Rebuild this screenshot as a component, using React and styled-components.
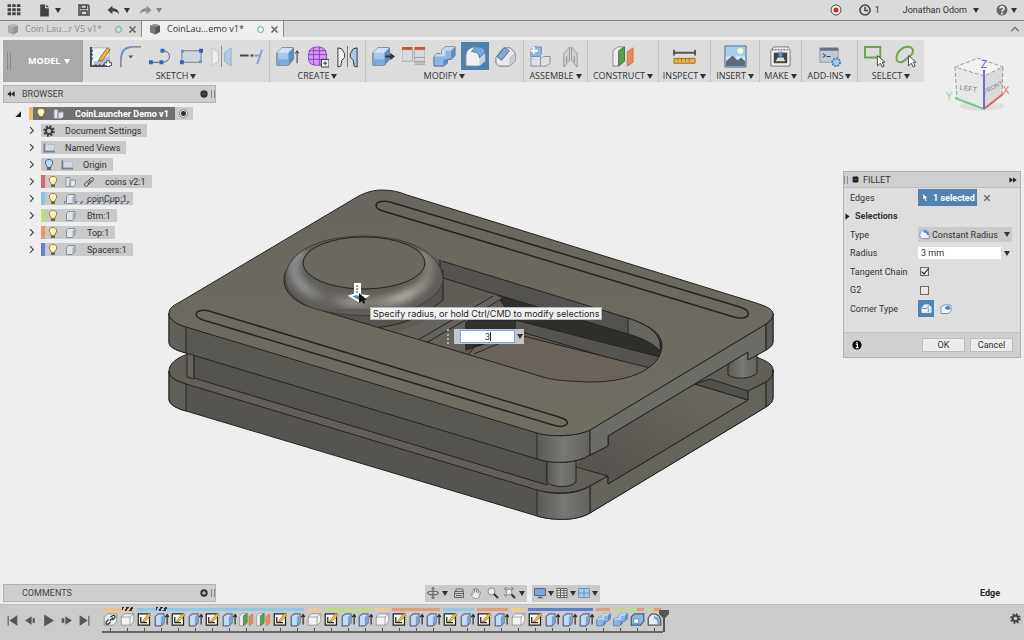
import React, { useState } from 'react';
import styled, { createGlobalStyle } from 'styled-components';

const GlobalStyle = createGlobalStyle`
  * {
    box-sizing: border-box;
  }

  body {
    margin: 0;
    background-color: #eeeeee;
    color: #333;
    font-family: Roboto, 'Noto Sans', sans-serif;
    font-size: 9px;
    line-height: 12px;
  }

  button, input, select {
    font: inherit;
    color: inherit;
    margin: 0;
    padding: 0;
    border: none;
    border-radius: 0;
    background: none;
  }

  svg {
    display: block;
    flex: none;
  }
`;

const Page = styled.div`
  display: flex;
  flex-direction: column;
  min-height: 100vh;
  overflow: hidden;
`;

/* top bar */

const TopBar = styled.header`
  display: flex;
  justify-content: space-between;
  align-items: center;
  height: 21px;
  padding: 0 7px;
  background-color: #dadada;
  border-bottom: 1px solid #858585;
`;

const TopGroup = styled.div`
  display: flex;
  align-items: center;
  gap: ${(p) => p.$gap || 17}px;
`;

const IconButton = styled.button`
  display: flex;
  align-items: center;
  gap: ${(p) => p.$gap || 3}px;
  opacity: ${(p) => (p.$dim ? 0.5 : 1)};
`;

const UserButton = styled(IconButton)`
  margin-left: 6px;
`;

const Caret = styled.span`
  width: 0;
  height: 0;
  border-left: 3px solid transparent;
  border-right: 3px solid transparent;
  border-top: 5px solid ${(p) => p.$color || '#333'};
`;

/* document tabs */

const TabBar = styled.nav`
  display: flex;
  height: 16px;
  background-color: #d7d7d7;
  font-family: 'Open Sans', 'Noto Sans', sans-serif;
`;

const Tab = styled.div`
  display: flex;
  align-items: center;
  width: 142px;
  padding: 0 4px 0 7px;
  border-right: 1px solid #8c8c8c;
  background-color: ${(p) => (p.$active ? '#efefef' : '#d7d7d7')};
  color: ${(p) => (p.$active ? '#333' : '#8d8d8d')};
`;

const TabName = styled.button`
  display: flex;
  flex: 1;
  align-items: center;
  gap: 6px;
  white-space: nowrap;

  svg {
    opacity: ${(p) => (p.$active ? 1 : 0.5)};
  }
`;

const TabStatus = styled.span`
  width: 7px;
  height: 7px;
  margin-right: 6px;
  border: 1px solid #55b795;
  border-radius: 50%;
`;

const Collapse = styled.button`
  margin: 0 4px 0 auto;
`;

/* ribbon */

const Ribbon = styled.div`
  display: flex;
  align-self: flex-start;
  height: 42px;
  margin: 3px 0 0 3px;
  background-color: #dcdcdc;
  font-family: 'Open Sans', 'Noto Sans', sans-serif;
`;

const Workspace = styled.button`
  display: flex;
  align-items: center;
  width: 80px;
  padding-left: 4px;
  gap: 4px;
  background-color: #a9a9a9;
  color: #fff;
  font-weight: 700;
`;

const Grip = styled.span`
  width: 4px;
  height: ${(p) => p.$h || 18}px;
  margin-right: ${(p) => p.$mr || 0}px;
  border-left: 1px solid #8a8a8a;
  border-right: 1px solid #8a8a8a;
`;

const Group = styled.section`
  display: flex;
  flex-direction: column;
  justify-content: space-between;
  width: ${(p) => p.$w}px;
  padding: 2px 2px 0;
  border-right: 1px solid #c2c2c2;

  &:last-child {
    border-right: none;
  }
`;

const GroupIcons = styled.div`
  display: flex;
  justify-content: space-around;
`;

const Tool = styled.button`
  display: grid;
  place-items: center;
  width: 28px;
  height: 28px;
  background-color: ${(p) => (p.$active ? '#4f80ab' : 'transparent')};
`;

const GroupLabel = styled.button`
  display: flex;
  justify-content: center;
  align-items: center;
  gap: 2px;
  height: 12px;
  white-space: nowrap;
`;

/* stage */

const Stage = styled.main`
  position: relative;
  display: flex;
  flex: 1;
  flex-direction: column;
  justify-content: space-between;
  padding: 3px 3px 2px;
`;

const ModelView = styled.svg`
  position: absolute;
  inset: 0;
  width: 100%;
  height: 100%;
`;

const CubeView = styled.svg`
  position: absolute;
  top: -30px;
  right: 10px;
`;

const PanelRow = styled.div`
  position: relative;
  display: flex;
  justify-content: space-between;
  align-items: flex-start;
`;

const FooterRow = styled.div`
  position: relative;
  display: grid;
  grid-template-columns: 1fr auto 1fr;
  align-items: center;
`;

const PanelHead = styled.div`
  display: flex;
  align-items: center;
  gap: 3px;
  width: 213px;
  height: 18px;
  padding: 0 0 0 3px;
  border: 1px solid #b2b2b2;
  background-color: #cecece;
  color: #444;
`;

const PanelName = styled.span`
  flex: 1;
  padding-left: ${(p) => p.$indent || 0}px;
`;

const Tree = styled.ul`
  display: flex;
  flex-direction: column;
  gap: 4px;
  margin: 4px 0 0;
  padding: 0;
  list-style: none;
`;

const TreeRow = styled.li`
  display: flex;
  align-items: center;
  height: 13px;
  padding-left: ${(p) => (p.$root ? 8 : 21)}px;
`;

const Expander = styled.button`
  display: grid;
  place-items: center;
  width: 14px;
  height: 13px;
  margin-right: ${(p) => (p.$root ? 4 : 3)}px;
`;

const Node = styled.div`
  display: flex;
  align-items: center;
  gap: 6px;
  height: 13px;
  padding: 0 6px 0 2px;
  border-left: ${(p) => (p.$color ? `4px solid ${p.$color}` : 'none')};
  background-color: ${(p) => (p.$root ? '#717171' : '#c9c9c9')};
  color: ${(p) => (p.$root ? '#fff' : '#333')};
  font-weight: ${(p) => (p.$root ? 700 : 400)};
  white-space: nowrap;
`;

const NodeName = styled.span`
  padding-left: 4px;
`;

const EditedNode = styled(Node)`
  background-image: repeating-linear-gradient(120deg, #7485a8 0 2px, transparent 2px 5px);
  background-repeat: no-repeat;
  background-size: 66px 3px;
  background-position: right 3px bottom 1px;
`;

const Active = styled.label`
  display: grid;
  place-items: center;
  width: 18px;
  height: 13px;
  background-color: #cccccc;

  input {
    appearance: none;
    width: 9px;
    height: 9px;
    border: 1px solid #888;
    border-radius: 50%;
    background: radial-gradient(circle, #333 0 2px, #eee 3px);
  }
`;

/* fillet dialog */

const Dialog = styled.form`
  width: 178px;
  margin-top: 86px;
  border: 1px solid #b0b0b0;
  background-color: #dedede;
`;

const DialogHead = styled.div`
  display: flex;
  align-items: center;
  gap: 4px;
  height: 16px;
  padding: 0 3px 0 0;
  border-bottom: 1px solid #bdbdbd;
  background-color: #cfcfcf;
`;

const DialogBody = styled.div`
  display: flex;
  flex-direction: column;
  justify-content: space-between;
  height: 144px;
  padding: 1px 6px 15px;
`;

const Field = styled.div`
  display: grid;
  grid-template-columns: 68px 1fr;
  align-items: center;
  height: 17px;
`;

const FieldValue = styled.div`
  display: flex;
  align-items: center;
  gap: ${(p) => p.$gap || 0}px;
`;

const Picked = styled.button`
  display: flex;
  align-items: center;
  gap: 3px;
  height: 17px;
  padding: 0 2px 0 3px;
  background-color: #4f84b0;
  color: #fff;
  font-weight: 700;
  white-space: nowrap;
`;

const Disclosure = styled.button`
  display: flex;
  align-items: center;
  gap: 4px;
  height: 17px;
  margin-left: -6px;
  font-weight: 700;
`;

const SelectBox = styled.div`
  display: flex;
  align-items: center;
  width: 94px;
  height: 15px;
  padding: 0 2px 0 1px;
  background-color: #cacaca;

  select {
    flex: 1;
    min-width: 0;
    padding-left: 2px;
    appearance: none;
    outline: none;
  }
`;

const TextInput = styled.input`
  width: 83px;
  height: 12px;
  padding-left: 3px;
  margin-right: 3px;
  background-color: #fff;
`;

const Check = styled.input`
  appearance: none;
  width: 9px;
  height: 9px;
  margin-left: 2px;
  border: 1px solid #666;
  background-color: #e8e8e8;

  &:checked::after {
    content: '';
    display: block;
    width: 3px;
    height: 6px;
    margin: -1px 0 0 2px;
    border: solid #111;
    border-width: 0 1px 1px 0;
    transform: rotate(40deg);
  }
`;

const CornerButton = styled.button`
  display: grid;
  place-items: center;
  width: 16px;
  height: 17px;
  background-color: ${(p) => (p.$active ? '#4f84b0' : 'transparent')};
`;

const DialogFoot = styled.div`
  display: flex;
  align-items: center;
  gap: 5px;
  height: 25px;
  padding: 0 7px 0 8px;
  border-top: 1px solid #c0c0c0;
  background-color: #d0d0d0;
`;

const PushButton = styled.button`
  width: 43px;
  height: 14px;
  border: 1px solid #bdbdbd;
  background-color: #ececec;
  line-height: 12px;

  &:first-of-type {
    margin-left: auto;
  }
`;

/* things floating over the model */

const Hint = styled.div`
  position: absolute;
  top: 225px;
  left: calc(50% - 142px);
  height: 13px;
  padding: 0 2px;
  border: 1px solid #b5b5b5;
  background-color: #f1f1f1;
  color: #222;
  font-family: Inter, sans-serif;
  font-size: 9px;
  line-height: 11px;
  white-space: nowrap;
`;

const ValueBox = styled.label`
  position: absolute;
  top: 247px;
  left: calc(50% - 65px);
  display: flex;
  align-items: center;
  gap: 1px;
  height: 15px;

  &::before {
    content: '';
    height: 15px;
    border-left: 2px dotted #b0b0b0;
  }
`;

const ValueFrame = styled.span`
  position: relative;
  display: flex;
  align-items: center;
  gap: 2px;
  height: 15px;
  margin-left: 4px;
  padding: 0 1px 0 6px;
  background-color: #c5c5c5;

  input {
    width: 55px;
    height: 13px;
    border: 1px solid #7ba6dd;
    background-color: #fff;
    text-align: center;
    outline: none;
  }
`;

const TextCursor = styled.span`
  position: absolute;
  top: 3px;
  left: 36px;
  height: 9px;
  border-left: 1px solid #333;
`;

/* navigation bar + timeline */

const NavBar = styled.div`
  display: flex;
  gap: 5px;
`;

const NavGroup = styled.div`
  display: flex;
  align-items: center;
  gap: ${(p) => p.$gap}px;
  height: 17px;
  padding: 0 2px;
  background-color: #cacaca;
`;

const Selected = styled.strong`
  justify-self: end;
  padding-right: 21px;
  font-weight: 700;
  color: #222;
`;

const Timeline = styled.footer`
  display: flex;
  height: 36px;
  padding: 3px 3px 0 6px;
  border-top: 1px solid #bbb;
  background-color: #cbcbcb;
`;

const Playback = styled.div`
  display: flex;
  height: 24px;
  align-items: center;
  gap: 5px;
  margin-right: 11px;
`;

const History = styled.div`
  display: flex;
  align-items: flex-start;
`;

const Stretch = styled.div`
  display: flex;
  flex-wrap: wrap;
  width: ${(p) => p.$count * 17}px;

  &::before {
    content: '';
    width: 100%;
    height: 3px;
    margin: 0 2px 0 1px;
    background: ${(p) => p.$color};
  }
`;

const Step = styled.button`
  position: relative;
  display: flex;
  align-items: flex-start;
  width: 17px;
  height: 22px;
  padding: 1px 0 0 1px;
  border-bottom: 2px solid #666;

  &::after {
    content: '';
    position: absolute;
    left: 8px;
    bottom: 0;
    height: 3px;
    border-left: 1px solid #555;
  }
`;

const Hatch = styled.span`
  position: absolute;
  top: -4px;
  left: 3px;
  width: 11px;
  height: 4px;
  background: repeating-linear-gradient(120deg, #333 0 2px, transparent 2px 4px);
`;

const Marker = styled.svg`
  margin-left: -4px;
`;

const Settings = styled.button`
  align-self: flex-start;
  margin: 5px 0 0 auto;
`;

const box = (
  <>
    <path d="M3 8l5-5h12v12l-5 6H3z" fill="#a5c8ec" stroke="#55606f" />
    <path d="M3 8l5-5h12l-5 5z" fill="#cfe2f6" />
    <path d="M15 8l5-5v12l-5 6z" fill="#5f8cc4" />
    <path d="M3 15h12v6H3z" fill="#7fa9dc" />
  </>
);

const cursor = <path d="M14 11v11l3-3 2 4 2-1-2-4h3z" fill="#fff" stroke="#444" />;

const icons = {
  grid: (
    <path d="M1 2h6v5H1zM9 2h6v5H9zM17 2h6v5h-6zM1 9h6v5H1zM9 9h6v5H9zM17 9h6v5h-6zM1 16h6v5H1zM9 16h6v5H9zM17 16h6v5h-6z" fill="#444" />
  ),
  file: <path d="M4 1h9v7h7v15H4zM15 1l5 5h-5z" fill="#444" />,
  save: (
    <path d="M2 2h18l2 2v18H2zM6 2v7h11V2M6 22v-8h12v8" fill="none" stroke="#444" strokeWidth="3" />
  ),
  undo: <path d="M1 11l9-8v5c8 0 12 4 12 11-3-4-6-5-12-5v5z" fill="#444" />,
  redo: <path d="M23 11l-9-8v5c-8 0-12 4-12 11 3-4 6-5 12-5v5z" fill="#444" />,
  record: (
    <>
      <circle cx="12" cy="12" r="10" fill="#f4f4f4" stroke="#444" strokeWidth="2" />
      <circle cx="12" cy="12" r="5" fill="#d32222" />
    </>
  ),
  clock: (
    <path d="M12 2a10 10 0 1 0 .1 0zM12 6v7h6" fill="none" stroke="#444" strokeWidth="3" />
  ),
  cube: (
    <>
      <path d="M2 5l11-3 9 3v13l-9 5-11-5z" fill="#555" />
      <path d="M2 5l11 3v15L2 18z" fill="#7b7b7b" />
      <path d="M2 5l11-3 9 3-9 3z" fill="#9b9b9b" />
    </>
  ),
  close: <path d="M4 4l16 16M20 4L4 20" stroke="#666" strokeWidth="4" />,
  up: <path d="M3 17l9-9 9 9" fill="none" stroke="#666" strokeWidth="3" />,
  sketch: (
    <>
      <path d="M2 3h19v18H2z" fill="#eef2f8" stroke="#a8b2c0" />
      <path d="M5 17c5 0 10-2 16-6v9H5z" fill="#a4c0e6" />
      <path d="M2 2v20h20M2 6h2M2 10h2M2 14h2M7 22v-2M11 22v-2M15 22v-2" fill="none" stroke="#3f4a5c" strokeWidth="2" />
      <path d="M11 14l8-11 3 2-8 11-4 1z" fill="#f2b632" stroke="#8a6a2a" />
      <path d="M20 16v7M16 20h8" stroke="#555" strokeWidth="4" />
      <path d="M20 17v5M17 20h6" stroke="#fff" strokeWidth="2" />
    </>
  ),
  arc: (
    <>
      <path d="M2 23v-7" stroke="#555" />
      <path d="M2 16C2 7 6 2 14 2" fill="none" stroke="#6c93c9" strokeWidth="2" />
      <path d="M14 2h9" stroke="#555" />
      <path d="M10 11h5l-3 3z" fill="#555" />
    </>
  ),
  spline: (
    <>
      <path d="M1 18h14c8-1 9-11 0-12" fill="none" stroke="#555" />
      <path d="M0 16h4v4H0zM11 16h4v4h-4zM12 4h4v4h-4z" fill="#3366b8" />
    </>
  ),
  rect: (
    <>
      <path d="M2 6h20v12H2z" fill="#cfd6df" stroke="#777" />
      <path d="M0 16h4v4H0zM20 4h4v4h-4z" fill="#3366b8" />
      <path d="M20 16h3v3h-3zM1 5h3v3H1z" fill="#6d93cb" />
    </>
  ),
  mirror: (
    <>
      <path d="M2 3l7 5v9l-7 5z" fill="#ececec" stroke="#c0c0c0" />
      <path d="M22 3l-7 5v9l7 5z" fill="#b3cbe8" stroke="#9ab0cc" />
      <path d="M12 1v22" stroke="#888" />
    </>
  ),
  extend: (
    <>
      <path d="M0 11h9M11 11h3" stroke="#444" strokeWidth="2" />
      <path d="M15 11h6M23 5l-5 15" stroke="#7fa3d3" strokeWidth="2" />
    </>
  ),
  extrude: (
    <>
      <g transform="translate(-2 0)">{box}</g>
      <path d="M22 19V7M20 9l2-3 2 3" fill="none" stroke="#333" />
    </>
  ),
  form: (
    <>
      <path d="M4 5c4-4 12-4 16 0 2 5 2 9 0 14-5 3-11 3-16 0-2-5-2-9 0-14z" fill="#d29af0" stroke="#8d3fc0" />
      <path d="M2 10h20M2 15h20M8 2v19M14 2v19M3 6h18" stroke="#8d3fc0" fill="none" />
      <path d="M16 15h8v8h-8z" fill="#eee" stroke="#333" />
      <path d="M18 19h4M20 17v4" stroke="#333" />
    </>
  ),
  mirrorSolid: (
    <>
      <path d="M2 3l4 1 3 5v4l-3 3-1 6-3 1z" fill="#f2f2f2" stroke="#333" />
      <path d="M22 3l-4 1-3 5v4l3 3 1 6 3 1z" fill="#a9c8ea" stroke="#333" />
      <path d="M12 1v22" stroke="#777" />
    </>
  ),
  pushPull: (
    <>
      <g transform="translate(-2 0)">{box}</g>
      <path d="M14 11h5V8l5 4-5 4v-3h-5z" fill="#333" />
    </>
  ),
  table: (
    <>
      <path d="M0 5h11v12H0zM13 5h11v13H13z" fill="#d9dbe0" stroke="#aaa" />
      <path d="M0 2h11v3H0zM13 2h11v3H13z" fill="#c75532" />
      <path d="M13 13h11M13 17h11M13 20h11" stroke="#999" />
    </>
  ),
  combine: (
    <>
      <path d="M1 12l3-3h5V5l4-3h10v9l-4 4h-4v4l-4 3H1z" fill="#8db4e2" stroke="#4d6b94" />
      <path d="M1 12l3-3h5V5l4-3h10l-4 4h-6v6z" fill="#c0daf4" />
      <path d="M19 6l4-4v9l-4 4zM11 15h4v4l-4 3z" fill="#5f8cc4" />
    </>
  ),
  fillet: (
    <>
      <path d="M2 21V12C2 6 5 3 11 2h4c5 0 7 3 7 7v8l-6 5H3z" fill="#eff1f5" stroke="#7c8796" />
      <path d="M16 22v-8c0-3 3-5 6-6v9z" fill="#c9ced8" />
      <path d="M8 7c2-4 4-5 7-5 5 0 7 3 7 6l-6 5c0-4-3-6-8-6z" fill="#78a8dc" stroke="#4f729e" />
    </>
  ),
  chamfer: (
    <>
      <path d="M2 13l8-10h7l5 5v9l-6 5H5l-3-3z" fill="#e6e9ee" stroke="#6d7683" />
      <path d="M16 22v-9l6-5v9z" fill="#c4c9d3" />
      <path d="M3 12l8-9 5 3-8 10z" fill="#7fa9dc" stroke="#55708f" />
    </>
  ),
  component: (
    <>
      <path d="M2 12h10v10H2zM12 15l3-3h7v7l-4 3h-6z" fill="#dcdfe5" stroke="#8c93a0" />
      <path d="M2 5l3-3h8v7l-2 3H2z" fill="#8db4e2" stroke="#7391b8" />
      <path d="M5 2v7M2 6h7" stroke="#fff" strokeWidth="2" />
    </>
  ),
  joint: (
    <>
      <path d="M5 9l6-7v14l-6 7zM19 9l-6-7v14l6 7z" fill="#cfd1d6" stroke="#999" />
      <path d="M8 12v6M16 12v6" stroke="#888" />
    </>
  ),
  plane: (
    <>
      <path d="M1 6l5-4h6v3l-5 17H1z" fill="#eee" stroke="#888" />
      <path d="M7 6l6-4v15l-6 5z" fill="#57a04d" stroke="#3f6f39" />
      <path d="M16 7l6-4v15l-6 4z" fill="#ef8752" stroke="#c57a50" />
    </>
  ),
  measure: (
    <>
      <path d="M1 8h22M1 5v6M23 5v6" stroke="#555" strokeWidth="2" />
      <path d="M1 14h22v5H1z" fill="#eeb63c" stroke="#94702a" />
      <path d="M5 14v3M9 14v3M13 14v3M17 14v3" stroke="#94702a" />
    </>
  ),
  image: (
    <>
      <path d="M1 1h22v22H1z" fill="#a9cdec" stroke="#4a6886" />
      <path d="M2 12h20v6H2z" fill="#d6e8f6" />
      <circle cx="17" cy="6" r="3" fill="#fff9d8" />
      <path d="M2 17l7-6 5 5 4-3 4 4v5H2z" fill="#5c6b7d" />
    </>
  ),
  printer: (
    <>
      <path d="M2 5l3-3h15l2 3v17H2z" fill="#eee" stroke="#777" />
      <path d="M5 8h14v11H5z" fill="#444" />
      <path d="M7 17l2-4h6l2 4z" fill="#ddd" />
      <path d="M10 7h4v4l-2 2-2-2z" fill="#5b93cf" />
      <path d="M3 5h18" stroke="#444" strokeDasharray="2 1" />
    </>
  ),
  script: (
    <>
      <path d="M2 3h19v15H2z" fill="#c3c9d6" stroke="#949bab" />
      <path d="M2 3h19v3H2z" fill="#68748a" />
      <path d="M5 9l3 2-3 2M9 12h4" fill="none" stroke="#333" />
      <circle cx="19" cy="18" r="4" fill="#a9cdec" stroke="#4b79ad" strokeWidth="2" strokeDasharray="2 1" />
    </>
  ),
  pickBox: (
    <>
      <path d="M1 2h16v11H1z" fill="none" stroke="#6fa548" strokeWidth="2" />
      {cursor}
    </>
  ),
  pickFree: (
    <>
      <path d="M2 16C0 8 8 1 15 2c6 2 4 8 0 10s-5 6-9 6c-2 0-4-1-4-2z" fill="none" stroke="#6fa548" strokeWidth="2" />
      {cursor}
    </>
  ),
  bulb: (
    <>
      <path d="M12 1c-9 0-9 9-4 13v3h8v-3c5-4 5-13-4-13z" fill="#fdf3bb" stroke="#8f8252" strokeWidth="2" />
      <path d="M8 18h8v4H8z" fill="#666" />
    </>
  ),
  bulbOff: (
    <>
      <path d="M12 1c-9 0-9 9-4 13v3h8v-3c5-4 5-13-4-13z" fill="#b7d8f2" stroke="#50697d" strokeWidth="2" />
      <path d="M8 18h8v4H8z" fill="#666" />
    </>
  ),
  gear: (
    <>
      <circle cx="12" cy="12" r="9" fill="none" stroke="#444" strokeWidth="5" strokeDasharray="4 3" />
      <circle cx="12" cy="12" r="6" fill="none" stroke="#444" strokeWidth="4" />
    </>
  ),
  folder: (
    <>
      <path d="M1 3h4v14h19v4H1z" fill="#777f8f" />
      <path d="M5 5h18v12H5z" fill="#d2d8e4" stroke="#a9afbd" />
    </>
  ),
  parts: (
    <path d="M2 3h8v18H2zM10 11l3-3h8v9l-4 4h-7z" fill="#e1e4ea" stroke="#8c93a1" strokeWidth="2" />
  ),
  body: (
    <>
      <path d="M3 7l4-4h13v12l-5 6H3z" fill="#dfe2e9" stroke="#858c9a" strokeWidth="2" />
      <path d="M15 8l5-5v12l-5 6z" fill="#a7adba" />
    </>
  ),
  bodyLight: (
    <path d="M2 8l5-5h15v12l-5 6H2zM2 8h14v13M16 8l6-5" fill="#f3f3f3" stroke="#777" />
  ),
  link: (
    <path d="M10 15l7-7M12 8l4-4c4-2 7 2 4 5l-5 5c-2 2-4 2-5 0M12 16l-4 4c-4 2-7-2-4-5l5-5c2-2 4-1 5 1" fill="none" stroke="#444" strokeWidth="2" />
  ),
  linkStep: (
    <>
      <path d="M2 8l5-5h15v12l-5 6H2z" fill="#eee" stroke="#666" />
      <path d="M11 14l5-5M12 8l3-2c4-2 6 2 3 4l-3 3M12 16l-3 3c-4 2-6-2-3-4l3-3" fill="none" stroke="#333" strokeWidth="2" />
    </>
  ),
  sketchStep: (
    <>
      <path d="M2 3h18v18H2z" fill="#f6f6f6" stroke="#222" strokeWidth="2" />
      <path d="M6 8v9h10" fill="none" stroke="#222" strokeWidth="2" />
      <path d="M10 13l9-11 3 3-9 10-4 1z" fill="#f2c232" stroke="#8a6a2a" />
    </>
  ),
  extrudeStep: (
    <>
      <path d="M2 7l5-4h9v14l-5 5H2z" fill="#c4dcf4" stroke="#526b8c" strokeWidth="2" />
      <path d="M11 8l5-4v13l-5 4z" fill="#7aa3d4" />
      <path d="M21 20V5M18 8l3-4 3 4" fill="none" stroke="#333" strokeWidth="2" />
    </>
  ),
  shell: (
    <>
      <path d="M2 8l5-5h15v12l-5 6H2z" fill="#8db4e2" stroke="#3d6290" strokeWidth="2" />
      <path d="M6 11h8v7H6z" fill="#fff" stroke="#3d6290" />
    </>
  ),
  filletStep: (
    <>
      <path d="M2 21V10c2-5 5-8 10-7 6 1 9 5 10 11v7z" fill="#e4ebf4" stroke="#555" strokeWidth="2" />
      <path d="M11 8c5 1 8 5 8 12" fill="none" stroke="#7aa3d4" strokeWidth="4" />
    </>
  ),
  orbit: (
    <path d="M12 1v22M9 4l3-3 3 3M1 12c0-5 22-5 22 0s-22 5-22 0zM9 20l3 3 3-3" fill="none" stroke="#555" strokeWidth="2" />
  ),
  lookAt: (
    <path d="M3 9h18v12H3zM6 9V4h14v5M3 13h18M6 17h12" fill="none" stroke="#666" strokeWidth="2" />
  ),
  hand: (
    <path d="M7 22c-3-4-5-6-5-9l4 2V5h3v6l1-9h3v9l2-7 2 1-1 8 3-4 2 1-3 10-3 4z" fill="#eee" stroke="#555" />
  ),
  zoom: (
    <>
      <circle cx="9" cy="9" r="7" fill="#e8eef4" stroke="#888" strokeWidth="2" />
      <path d="M14 14l8 8" stroke="#333" strokeWidth="4" />
    </>
  ),
  fit: (
    <>
      <path d="M2 6V2h4M14 2h4v4M2 14v4h4" fill="none" stroke="#777" strokeWidth="2" />
      <circle cx="10" cy="10" r="6" fill="#e8eef4" stroke="#888" strokeWidth="2" />
      <path d="M15 15l7 7" stroke="#333" strokeWidth="4" />
    </>
  ),
  monitor: (
    <>
      <path d="M1 3h22v14H1z" fill="#7ba8dc" stroke="#50688a" strokeWidth="2" />
      <path d="M8 21h9" stroke="#555" strokeWidth="3" />
    </>
  ),
  gridView: (
    <path d="M2 3h20v18H2zM2 7h20M2 12h20M2 17h20M9 3v18M16 3v18" fill="#eee" stroke="#666" strokeWidth="2" />
  ),
  viewports: (
    <path d="M1 3h22v18H1zM12 3v18M1 12h22" fill="#a9c8ea" stroke="#7494ba" strokeWidth="2" />
  ),
  first: <path d="M4 3v18M20 4L8 12l12 8z" fill="#555" stroke="#555" strokeWidth="2" />,
  back: <path d="M14 4L2 12l12 8zM16 8h4v8h-4z" fill="#555" />,
  play: <path d="M4 1l18 11L4 23z" fill="#555" />,
  next: <path d="M10 4l12 8-12 8zM3 8h5v8H3z" fill="#555" />,
  last: <path d="M20 3v18M4 4l12 8-12 8z" fill="#555" stroke="#555" strokeWidth="2" />,
  rewind: <path d="M12 4v16L1 12zM23 4v16l-11-8z" fill="#222" />,
  forward: <path d="M1 4v16l11-8zM12 4v16l11-8z" fill="#222" />,
  minus: (
    <>
      <circle cx="12" cy="12" r="11" fill="#333" />
      <path d="M6 12h12" stroke="#777" strokeWidth="2" />
    </>
  ),
  plus: (
    <>
      <circle cx="12" cy="12" r="11" fill="#333" />
      <path d="M6 12h12M12 6v12" stroke="#ddd" strokeWidth="3" />
    </>
  ),
  square: (
    <>
      <rect x="2" y="2" width="20" height="20" rx="4" fill="#222" />
      <path d="M7 12h10" stroke="#888" strokeWidth="2" />
    </>
  ),
  info: (
    <>
      <circle cx="12" cy="12" r="11" fill="#000" />
      <path d="M9 10h4v8M9 18h7" fill="none" stroke="#fff" strokeWidth="3" />
      <circle cx="12" cy="6" r="2" fill="#fff" />
    </>
  ),
  help: (
    <>
      <circle cx="12" cy="12" r="11" fill="#666" />
      <path d="M8 9c0-5 8-5 8 0 0 3-4 3-4 6" fill="none" stroke="#fff" strokeWidth="3" />
      <circle cx="12" cy="19" r="2" fill="#fff" />
    </>
  ),
  right: <path d="M8 3l9 9-9 9" fill="none" stroke="#444" strokeWidth="3" />,
  open: <path d="M21 4v17H4z" fill="#222" />,
  solidRight: <path d="M5 1l14 11L5 23z" fill="#222" />,
  arrow: <path d="M5 1v18l4-4 4 8 4-2-4-7h6z" fill="#fff" stroke="#333" />,
  radius: (
    <>
      <path d="M2 9c3-6 8-7 14-6l6 5v13H8l-6-4z" fill="#eef3f9" stroke="#7d95b5" strokeWidth="2" />
      <path d="M10 5c5 0 9 3 10 8" fill="none" stroke="#4f84c4" strokeWidth="4" />
    </>
  ),
  rolling: (
    <>
      <path d="M2 11l5-7h10l5 5v12H2z" fill="#eef3f9" stroke="#dbe6f2" strokeWidth="2" />
      <path d="M3 12h9c3-1 4-4 4-7M16 12v8" fill="none" stroke="#5d7ea6" strokeWidth="2" />
    </>
  ),
  setback: (
    <>
      <path d="M2 8l6-4h14v11l-5 6H2z" fill="#eef3f9" stroke="#7d95b5" strokeWidth="2" />
      <path d="M9 9l9-4 3 7-7 2z" fill="#4f84c4" />
    </>
  ),
};

const Icon = ({ name, size = 24 }) => (
  <svg width={size} height={size} viewBox="0 0 24 24" aria-hidden="true">
    {icons[name]}
  </svg>
);

const ribbon = [
  { label: 'SKETCH', width: 187, tools: ['sketch', 'arc', 'spline', 'rect', 'mirror', 'extend'] },
  { label: 'CREATE', width: 96, tools: ['extrude', 'form', 'mirrorSolid'] },
  { label: 'MODIFY', width: 158, tools: ['pushPull', 'table', 'combine', 'fillet', 'chamfer'] },
  { label: 'ASSEMBLE', width: 64, tools: ['component', 'joint'] },
  { label: 'CONSTRUCT', width: 71, tools: ['plane'] },
  { label: 'INSPECT', width: 52, tools: ['measure'] },
  { label: 'INSERT', width: 49, tools: ['image'] },
  { label: 'MAKE', width: 42, tools: ['printer'] },
  { label: 'ADD-INS', width: 56, tools: ['script'] },
  { label: 'SELECT', width: 66, tools: ['pickBox', 'pickFree'] },
];

const tree = [
  { name: 'Document Settings', icons: ['gear'] },
  { name: 'Named Views', icons: ['folder'] },
  { name: 'Origin', icons: ['bulbOff', 'folder'] },
  { name: 'coins v2:1', icons: ['bulb', 'parts', 'link'], color: '#e0626e' },
  { name: 'coinCup:1', icons: ['bulb', 'body'], color: '#86c5ec', edited: true },
  { name: 'Btm:1', icons: ['bulb', 'body'], color: '#c3e36f' },
  { name: 'Top:1', icons: ['bulb', 'body'], color: '#ee9560' },
  { name: 'Spacers:1', icons: ['bulb', 'body'], color: '#5f80d8' },
];

const S = 'sketchStep';
const E = 'extrudeStep';
const B = 'bodyLight';

const history = [
  { color: '#eec183', steps: ['linkStep', B], hatch: 1 },
  { color: '#90c8ea', steps: [S, E, S, E, S, E, 'plane', 'plane', S, E], hatch: 1 },
  { color: '#eecb91', steps: [B] },
  { color: '#bfdc85', steps: [S, E, E] },
  { color: '#eecb91', steps: [B] },
  { color: '#e99a73', steps: [S, E, E] },
  { color: '#90c8ea', steps: [S, E] },
  { color: '#e99a73', steps: [S, E] },
  { color: '#eecb91', steps: [B] },
  { color: '#5b7dd6', steps: [S, E, E, E] },
  { color: '#e99a73', steps: ['combine'] },
  { color: '#bfdc85', steps: ['combine'] },
  { color: 'linear-gradient(90deg, #bfdc85 50%, #e99a73 50%)', steps: ['shell'] },
  { color: 'linear-gradient(90deg, #bfdc85 50%, #e99a73 50%)', steps: ['filletStep'] },
];

const domePath = 'M285 277C288 250 322 236 364 236C410 236 442 254 443 280C442 292 425 306 400 313C375 318 335 316 310 307C293 299 285 289 285 277z';

const Model = () => (
  <ModelView viewBox="0 82 1024 522" role="img" aria-label="Coin launcher model">
    <defs>
      <linearGradient id="topFace" x1="0" y1="0" x2="0" y2="1">
        <stop offset="0" stopColor="#69665f" />
        <stop offset="1" stopColor="#706d63" />
      </linearGradient>
      <linearGradient id="round" x1="0" x2="1">
        <stop offset="0" stopColor="#5b5a56" />
        <stop offset="0.5" stopColor="#777773" />
        <stop offset="1" stopColor="#62625e" />
      </linearGradient>
      <linearGradient id="floor" x1="0" y1="1" x2="1" y2="0">
        <stop offset="0" stopColor="#55504b" />
        <stop offset="1" stopColor="#6d6963" />
      </linearGradient>
      <linearGradient id="shine" gradientUnits="userSpaceOnUse" x1="285" y1="0" x2="443" y2="0">
        <stop offset="0" stopColor="#858989" />
        <stop offset="0.12" stopColor="#8d9090" />
        <stop offset="0.27" stopColor="#66635f" />
        <stop offset="0.42" stopColor="#96918b" />
        <stop offset="0.55" stopColor="#807a74" />
        <stop offset="0.75" stopColor="#b3aba2" />
        <stop offset="0.88" stopColor="#8b8680" />
        <stop offset="1" stopColor="#62605c" />
      </linearGradient>
      <filter id="soft">
        <feGaussianBlur stdDeviation="3" />
      </filter>
      <clipPath id="domeClip">
        <path d={domePath} />
      </clipPath>
      <clipPath id="opening">
        <path d="M442 261L628 318C652 326 662 335 662 345C662 366 635 382 590 382C565 381 552 380 543 377L310 307C295 302 284 292 284 280C286 255 320 245 364 245C410 245 436 256 442 261z" />
      </clipPath>
    </defs>

    <g stroke="#252422" strokeWidth="1" strokeLinejoin="round">
      {/* bottom plate */}
      <path d="M169 372V399C169 404 175 408 186 411L537 516C550 520 575 522 590 513L766 407C771 404 773 401 773 397V369L590 330z" fill="#555450" />
      <path d="M186 384C173 380 169 376 169 371C169 364 176 358 188 354L750 355C766 360 773 364 773 370C773 375 771 379 766 382L748 391V400L608 484V476L590 486C580 492 560 496 537 490z" fill="#625e58" />
      <path d="M590 486L608 476V484L748 400V391L766 382V407L590 513z" fill="#64645d" />
      <path d="M766 382C771 379 773 375 773 370V397C773 401 771 404 766 407z" fill="#5e5d59" />
      <path d="M537 490C556 496 578 494 590 486V513C575 522 550 520 537 516z" fill="url(#round)" />
      <path d="M169 371C169 376 173 380 186 384V411C175 408 169 404 169 399z" fill="#5f5e59" />
      <path d="M608 484L748 400L695 385L590 440L577 466L608 476z" fill="url(#floor)" stroke="none" />
      <path d="M576 467L608 476V484L748 400L695 384" fill="none" />
      <path d="M695 384L748 400V391L710 379z" fill="#50504c" />

      {/* spacer walls and posts */}
      <path d="M187 350V377L194 379V352z" fill="#666560" />
      <path d="M194 352V378L547 485V455z" fill="#53524e" />
      <path d="M547 458V482C552 488 572 488 576 482V456z" fill="url(#round)" />
      <path d="M728 355V375C735 380 752 379 757 373V345z" fill="url(#round)" />

      {/* top plate */}
      <path d="M169 313V342C169 347 175 350 186 353L537 459C552 464 576 464 590 455L608 446V436L748 352V360L766 350C771 347 773 345 773 341V313z" fill="#595853" />
      <path d="M169 313C169 318 173 323 186 327V353C175 350 169 347 169 342z" fill="#605f5a" />
      <path d="M537 433C550 437 576 437 590 430V455C576 464 552 464 537 459z" fill="url(#round)" />
      <path d="M590 430L766 324V350L748 360V352L608 436V446L590 455z" fill="#6c6c66" />
      <path d="M766 324C771 321 773 318 773 314V341C773 345 771 347 766 350z" fill="#5c5b57" />
      <path d="M186 327C173 323 169 318 169 313C169 308 174 305 180 302L357 197C366 192 374 190 382 190C392 190 400 192 407 195L753 302C766 306 773 309 773 314C773 318 770 321 766 324L590 430C576 437 550 437 537 433z" fill="url(#topFace)" />

      {/* long grooves */}
      <path d="M390 202L740 307C746 309 749 312 748 315C747 318 740 319 734 317L383 211C376 209 375 206 377 203C380 201 385 201 390 202z" fill="none" strokeWidth="1.5" />
      <path d="M209 311L559 417C566 419 568 421 567 424C564 427 559 427 553 425L203 320C197 318 195 315 197 312C200 310 205 310 209 311z" fill="none" strokeWidth="1.5" />

      {/* opening */}
      <g clipPath="url(#opening)">
        <path d="M280 225H670V390H280z" fill="#605b55" stroke="none" />
        <path d="M498 295L550 305L662 345V362L520 327L500 300z" fill="#302f2d" />
        <path d="M440 258L628 318C652 326 664 336 660 351C655 345 645 339 628 334L498 295L440 277z" fill="#53524f" />
        <path d="M628 318C652 326 662 335 660 351C655 345 645 339 628 334z" fill="#666560" />
        <path d="M515 320L660 357L650 370L515 330z" fill="#555450" />
        <path d="M515 334L650 368V390H440L480 340z" fill="#6a635c" />
        <path d="M462 320H515V334L466 350z" fill="#31302e" />
        <path d="M390 335L493 295L503 298L465 322V350H400z" fill="#65635e" stroke="none" />
        <path d="M418 340L493 296M426 343L503 298M466 350L515 330M474 354L526 332" fill="none" />
        <path d="M283 276C283 290 292 303 312 312C345 334 400 336 443 300V270z" fill="#54534f" />
      </g>
      <path d="M442 261L628 318C652 326 662 335 662 345C662 366 635 382 590 382C565 381 552 380 543 377L310 307C295 302 284 292 284 280C284 275 285 271 289 268" fill="none" />
    </g>

    {/* coin */}
    <path d={domePath} fill="#5f5d59" />
    <g clipPath="url(#domeClip)">
      <path d="M303 250C284 270 296 290 330 299C352 305 385 304 405 296C432 285 436 266 422 252" fill="none" stroke="url(#shine)" strokeWidth="11" filter="url(#soft)" />
    </g>
    <path d={domePath} fill="none" stroke="#3f3e3a" />
    <ellipse cx="364" cy="263" rx="61" ry="26" fill="#6b6861" stroke="#252422" />

    {/* drag handle and pointer */}
    <path d="M355 284h5v9h-5zM350 296l6-2 4 1 7 1-8 5z" fill="#3a8fae" stroke="#fff" strokeWidth="2" />
    <path d="M356 284h3v9h-3z" fill="#fff" />
    <path d="M357 285v9" stroke="#333" strokeDasharray="2 1" />
    <path d="M359 293v10l3-2 2 3 1-1-1-3h3z" fill="#111" />
  </ModelView>
);

const ViewCube = () => (
  <CubeView width="68" height="64" viewBox="0 0 68 64" role="img" aria-label="View cube">
    <ellipse cx="36" cy="54" rx="22" ry="5" fill="#dfdfdf" />
    <path d="M9 15L38 24V57L11 47z" fill="#e8e8e8" />
    <path d="M38 24L57 15L56 42L38 57z" fill="#dadada" />
    <path d="M9 15L32 6L57 15L38 24z" fill="#f2f2f2" />
    <path d="M9 15L32 6L57 15L38 24zM9 15l2 32M57 15l-1 27" fill="none" stroke="#999" strokeDasharray="4 2" />
    <path d="M9 46L38 57" stroke="#79c98a" strokeWidth="2" />
    <path d="M38 57L57 42" stroke="#d36a6a" strokeWidth="2" />
    <path d="M38 57V18" stroke="#6b6bd6" strokeWidth="2" />
    <g fontFamily="Liberation Sans, sans-serif" fontSize="10" textAnchor="middle">
      <text x="38" y="16" fill="#5f5fd8">Z</text>
      <text x="3" y="48" fill="#7fe08f">Y</text>
      <text x="60" y="42" fill="#e66b6b">X</text>
      <text x="22" y="39" fill="#777" fontSize="7" transform="rotate(8 22 39)">LEFT</text>
      <text x="48" y="37" fill="#888" fontSize="6" transform="rotate(-28 48 37)">FRONT</text>
    </g>
  </CubeView>
);

const Browser = () => (
  <section>
    <PanelHead>
      <Icon name="rewind" size={8} />
      <PanelName $indent={4}>BROWSER</PanelName>
      <Icon name="minus" size={8} />
      <Grip $h={8} />
    </PanelHead>
    <Tree>
      <TreeRow $root>
        <Expander $root aria-label="Collapse">
          <Icon name="open" size={8} />
        </Expander>
        <Node $root $color="#f0bd6d">
          <Icon name="bulb" size={12} />
          <Icon name="parts" size={12} />
          <NodeName>CoinLauncher Demo v1</NodeName>
        </Node>
        <Active>
          <input type="radio" name="active" aria-label="Activate component" defaultChecked />
        </Active>
      </TreeRow>
      {tree.map((node) => {
        const Item = node.edited ? EditedNode : Node;
        return (
          <TreeRow key={node.name}>
            <Expander aria-label={`Expand ${node.name}`}>
              <Icon name="right" size={9} />
            </Expander>
            <Item $color={node.color}>
              {node.icons.map((name) => (
                <Icon key={name} name={name} size={12} />
              ))}
              <NodeName>{node.name}</NodeName>
            </Item>
          </TreeRow>
        );
      })}
    </Tree>
  </section>
);

const FilletDialog = () => {
  const [radius, setRadius] = useState('3 mm');

  return (
    <Dialog onSubmit={(e) => e.preventDefault()}>
      <DialogHead>
        <Grip $h={8} />
        <Icon name="square" size={7} />
        <PanelName>FILLET</PanelName>
        <Icon name="forward" size={8} />
      </DialogHead>
      <DialogBody>
        <Field>
          <span>Edges</span>
          <FieldValue $gap={6}>
            <Picked type="button">
              <Icon name="arrow" size={9} />1 selected
            </Picked>
            <IconButton type="button" aria-label="Clear selection">
              <Icon name="close" size={8} />
            </IconButton>
          </FieldValue>
        </Field>
        <Disclosure type="button">
          <Icon name="solidRight" size={7} />
          Selections
        </Disclosure>
        <Field>
          <label htmlFor="type">Type</label>
          <SelectBox>
            <Icon name="radius" size={11} />
            <select id="type">
              <option>Constant Radius</option>
            </select>
            <Caret />
          </SelectBox>
        </Field>
        <Field>
          <label htmlFor="radius">Radius</label>
          <FieldValue>
            <TextInput id="radius" value={radius} onChange={(e) => setRadius(e.target.value)} />
            <Caret />
          </FieldValue>
        </Field>
        <Field>
          <label htmlFor="tangent">Tangent Chain</label>
          <Check id="tangent" type="checkbox" defaultChecked />
        </Field>
        <Field>
          <label htmlFor="g2">G2</label>
          <Check id="g2" type="checkbox" />
        </Field>
        <Field>
          <span>Corner Type</span>
          <FieldValue $gap={4}>
            <CornerButton type="button" $active aria-label="Rolling ball">
              <Icon name="rolling" size={11} />
            </CornerButton>
            <CornerButton type="button" aria-label="Setback">
              <Icon name="setback" size={12} />
            </CornerButton>
          </FieldValue>
        </Field>
      </DialogBody>
      <DialogFoot>
        <Icon name="info" size={10} />
        <PushButton type="submit">OK</PushButton>
        <PushButton type="button">Cancel</PushButton>
      </DialogFoot>
    </Dialog>
  );
};

const App = () => {
  const [value, setValue] = useState('3');

  return (
    <Page>
      <GlobalStyle />
      <TopBar>
        <TopGroup>
          <IconButton aria-label="Data panel"><Icon name="grid" size={14} /></IconButton>
          <IconButton aria-label="File" $gap={4}><Icon name="file" size={13} /><Caret /></IconButton>
          <IconButton aria-label="Save"><Icon name="save" size={12} /></IconButton>
          <TopGroup $gap={9}>
            <IconButton aria-label="Undo" $gap={4}><Icon name="undo" size={13} /><Caret /></IconButton>
            <IconButton aria-label="Redo" $gap={4} $dim><Icon name="redo" size={13} /><Caret /></IconButton>
          </TopGroup>
        </TopGroup>
        <TopGroup>
          <IconButton aria-label="Record"><Icon name="record" size={12} /></IconButton>
          <IconButton $gap={4}><Icon name="clock" size={12} />1</IconButton>
          <UserButton $gap={6}>Jonathan Odom<Caret /></UserButton>
          <IconButton aria-label="Help"><Icon name="help" size={12} /><Caret /></IconButton>
        </TopGroup>
      </TopBar>
      <TabBar>
        <Tab>
          <TabName><Icon name="cube" size={12} />Coin Lau...r V5 v1*</TabName>
          <TabStatus />
          <IconButton aria-label="Close tab"><Icon name="close" size={9} /></IconButton>
        </Tab>
        <Tab $active>
          <TabName $active><Icon name="cube" size={12} />CoinLau...emo v1*</TabName>
          <TabStatus />
          <IconButton aria-label="Close tab"><Icon name="close" size={9} /></IconButton>
        </Tab>
        <Collapse aria-label="Collapse toolbar"><Icon name="up" size={10} /></Collapse>
      </TabBar>
      <Ribbon>
        <Workspace>
          <Grip $mr={13} />
          MODEL
          <Caret $color="#fff" />
        </Workspace>
        {ribbon.map((group) => (
          <Group key={group.label} $w={group.width}>
            <GroupIcons>
              {group.tools.map((name) => (
                <Tool key={name} $active={name === 'fillet'} aria-label={name}>
                  <Icon name={name} size={23} />
                </Tool>
              ))}
            </GroupIcons>
            <GroupLabel>{group.label}<Caret /></GroupLabel>
          </Group>
        ))}
      </Ribbon>
      <Stage>
        <Model />
        <ViewCube />
        <PanelRow>
          <Browser />
          <FilletDialog />
        </PanelRow>
        <Hint>Specify radius, or hold Ctrl/CMD to modify selections</Hint>
        <ValueBox>
          <ValueFrame>
            <input aria-label="Radius value" value={value} onChange={(e) => setValue(e.target.value)} />
            <TextCursor />
            <Caret />
          </ValueFrame>
        </ValueBox>
        <FooterRow>
          <PanelHead>
            <PanelName $indent={15}>COMMENTS</PanelName>
            <Icon name="plus" size={8} />
            <Grip $h={8} />
          </PanelHead>
          <NavBar>
            <NavGroup $gap={5}>
              <IconButton aria-label="Orbit"><Icon name="orbit" size={12} /><Caret /></IconButton>
              <IconButton aria-label="Look at"><Icon name="lookAt" size={12} /></IconButton>
              <IconButton aria-label="Pan"><Icon name="hand" size={12} /></IconButton>
              <IconButton aria-label="Zoom"><Icon name="zoom" size={12} /></IconButton>
              <IconButton aria-label="Fit"><Icon name="fit" size={12} /><Caret /></IconButton>
            </NavGroup>
            <NavGroup $gap={2}>
              <IconButton aria-label="Display" $gap={2}><Icon name="monitor" size={12} /><Caret /></IconButton>
              <IconButton aria-label="Grid" $gap={2}><Icon name="gridView" size={12} /><Caret /></IconButton>
              <IconButton aria-label="Viewports" $gap={2}><Icon name="viewports" size={12} /><Caret /></IconButton>
            </NavGroup>
          </NavBar>
          <Selected>Edge</Selected>
        </FooterRow>
      </Stage>
      <Timeline>
        <Playback>
          {['first', 'back', 'play', 'next', 'last'].map((name) => (
            <IconButton key={name} aria-label={name}><Icon name={name} size={13} /></IconButton>
          ))}
        </Playback>
        <History>
          {history.map((part, i) => (
            <Stretch key={i} $count={part.steps.length} $color={part.color}>
              {part.steps.map((name, j) => (
                <Step key={j} aria-label={name}>
                  {part.hatch === j && <Hatch />}
                  <Icon name={name} size={15} />
                </Step>
              ))}
            </Stretch>
          ))}
          <Marker width="10" height="26" viewBox="0 0 10 26" aria-hidden="true">
            <path d="M0 2h10v4l-4 4v14H4V10L0 6z" fill="#555" />
          </Marker>
        </History>
        <Settings aria-label="Timeline settings"><Icon name="gear" size={11} /></Settings>
      </Timeline>
    </Page>
  );
};

export default App;
